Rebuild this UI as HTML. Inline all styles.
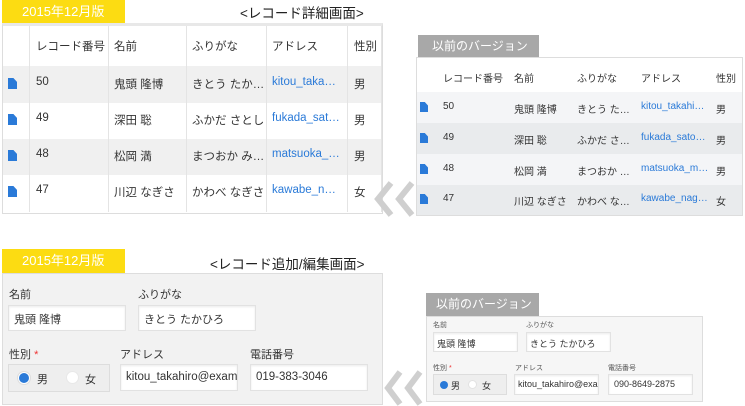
<!DOCTYPE html>
<html><head><meta charset="utf-8"><style>
*{margin:0;padding:0;box-sizing:border-box}
body{width:745px;height:406px;background:#fff;position:relative;overflow:hidden;font-family:"Liberation Sans","Noto Sans CJK JP",sans-serif;color:#333}
.a{position:absolute;white-space:nowrap}
.ytab{position:absolute;background:#fcdc12;color:#fff;font-size:13px;line-height:24px;padding-left:20px;white-space:nowrap}
.gtab{position:absolute;background:#a8a8a8;color:#fff;white-space:nowrap;overflow:hidden}
.bl{color:#2a7ad8}
.doc{position:absolute;width:9px;height:11px;background:#2a7ad8;clip-path:polygon(0 0,60% 0,100% 35%,100% 100%,0 100%)}
.inp{position:absolute;background:#fff;border:1px solid #e2e2e2;box-shadow:inset 0 1px 2px rgba(0,0,0,.08)}
.vl{position:absolute;width:1px;background:#e4e4e4}
.t1 .a{font-size:11.5px}
</style></head><body>

<!-- top left -->
<div class="ytab" style="left:2px;top:0;width:123px;height:24px;">2015年12月版</div>
<div class="a" style="left:240px;top:2px;font-size:13.5px;color:#222">&lt;レコード詳細画面&gt;</div>
<div class="a" style="left:2px;top:23px;width:381px;height:191px;border:1px solid #ddd;border-top:3px solid #e8e8e8;background:#fff"></div>
<div class="a" style="left:3px;top:66px;width:379px;height:37px;background:#f0f0f0"></div>
<div class="a" style="left:3px;top:139px;width:379px;height:36px;background:#f0f0f0"></div>
<div class="vl" style="left:29px;top:26px;height:186px"></div>
<div class="vl" style="left:108px;top:26px;height:186px"></div>
<div class="vl" style="left:186px;top:26px;height:186px"></div>
<div class="vl" style="left:266px;top:26px;height:186px"></div>
<div class="vl" style="left:347px;top:26px;height:186px"></div>
<div class="vl" style="left:381px;top:26px;height:186px"></div>
<div class="t1">
<div class="a" style="left:36px;top:38px">レコード番号</div><div class="a" style="left:114px;top:38px">名前</div><div class="a" style="left:192px;top:38px">ふりがな</div><div class="a" style="left:272px;top:38px">アドレス</div><div class="a" style="left:354px;top:38px">性別</div>
<div class="doc" style="left:8px;top:78px"></div><div class="a" style="left:36px;top:76px">50</div><div class="a" style="left:114px;top:76px">鬼頭 隆博</div><div class="a" style="left:192px;top:76px">きとう たか…</div><div class="a bl" style="left:272px;top:76px">kitou_taka…</div><div class="a" style="left:354px;top:76px">男</div>
<div class="doc" style="left:8px;top:114px"></div><div class="a" style="left:36px;top:112px">49</div><div class="a" style="left:114px;top:112px">深田 聡</div><div class="a" style="left:192px;top:112px">ふかだ さとし</div><div class="a bl" style="left:272px;top:112px">fukada_sat…</div><div class="a" style="left:354px;top:112px">男</div>
<div class="doc" style="left:8px;top:150px"></div><div class="a" style="left:36px;top:148px">48</div><div class="a" style="left:114px;top:148px">松岡 満</div><div class="a" style="left:192px;top:148px">まつおか み…</div><div class="a bl" style="left:272px;top:148px">matsuoka_…</div><div class="a" style="left:354px;top:148px">男</div>
<div class="doc" style="left:8px;top:186px"></div><div class="a" style="left:36px;top:184px">47</div><div class="a" style="left:114px;top:184px">川辺 なぎさ</div><div class="a" style="left:192px;top:184px">かわべ なぎさ</div><div class="a bl" style="left:272px;top:184px">kawabe_n…</div><div class="a" style="left:354px;top:184px">女</div>
</div>

<!-- top right -->
<div class="gtab" style="left:418px;top:35px;width:121px;height:22px;font-size:12px;line-height:22px;padding-left:14px">以前のバージョン</div>
<div class="a" style="left:416px;top:57px;width:327px;height:159px;border:1px solid #ddd;background:#fff"></div>
<div class="a" style="left:417px;top:92px;width:325px;height:31px;background:#f4f5f7"></div>
<div class="a" style="left:417px;top:123px;width:325px;height:31px;background:#e9ebed"></div>
<div class="a" style="left:417px;top:154px;width:325px;height:31px;background:#f4f5f7"></div>
<div class="a" style="left:417px;top:185px;width:325px;height:30px;background:#e9ebed"></div>
<div style="font-size:10px">
<div class="a" style="left:443px;top:70px">レコード番号</div><div class="a" style="left:514px;top:70px">名前</div><div class="a" style="left:577px;top:70px">ふりがな</div><div class="a" style="left:641px;top:70px">アドレス</div><div class="a" style="left:716px;top:70px">性別</div>
<div class="doc" style="left:420px;top:102px;width:8px;height:10px"></div><div class="a" style="left:443px;top:101px">50</div><div class="a" style="left:514px;top:101px">鬼頭 隆博</div><div class="a" style="left:577px;top:101px">きとう た…</div><div class="a bl" style="left:641px;top:101px">kitou_takahi…</div><div class="a" style="left:716px;top:101px">男</div>
<div class="doc" style="left:420px;top:133px;width:8px;height:10px"></div><div class="a" style="left:443px;top:132px">49</div><div class="a" style="left:514px;top:132px">深田 聡</div><div class="a" style="left:577px;top:132px">ふかだ さ…</div><div class="a bl" style="left:641px;top:132px">fukada_sato…</div><div class="a" style="left:716px;top:132px">男</div>
<div class="doc" style="left:420px;top:164px;width:8px;height:10px"></div><div class="a" style="left:443px;top:163px">48</div><div class="a" style="left:514px;top:163px">松岡 満</div><div class="a" style="left:577px;top:163px">まつおか …</div><div class="a bl" style="left:641px;top:163px">matsuoka_m…</div><div class="a" style="left:716px;top:163px">男</div>
<div class="doc" style="left:420px;top:194px;width:8px;height:10px"></div><div class="a" style="left:443px;top:193px">47</div><div class="a" style="left:514px;top:193px">川辺 なぎさ</div><div class="a" style="left:577px;top:193px">かわべ な…</div><div class="a bl" style="left:641px;top:193px">kawabe_nag…</div><div class="a" style="left:716px;top:193px">女</div>
</div>

<svg class="a" style="left:372px;top:180px" width="48" height="38"><path d="M19 3 L6 19 L19 35 M40 3 L27 19 L40 35" fill="none" stroke="#cfcfcf" stroke-width="6"/></svg>

<!-- bottom left -->
<div class="ytab" style="left:2px;top:249px;width:123px;height:24px;">2015年12月版</div>
<div class="a" style="left:210px;top:253px;font-size:13.5px;color:#222">&lt;レコード追加/編集画面&gt;</div>
<div class="a" style="left:2px;top:273px;width:381px;height:132px;border:1px solid #ddd;background:#f2f2f2"></div>
<div style="font-size:11px">
<div class="a" style="left:9px;top:286px">名前</div>
<div class="a" style="left:138px;top:286px">ふりがな</div>
<div class="inp" style="left:8px;top:305px;width:118px;height:26px"></div><div class="a" style="left:14px;top:311px">鬼頭 隆博</div>
<div class="inp" style="left:138px;top:305px;width:118px;height:26px"></div><div class="a" style="left:144px;top:311px">きとう たかひろ</div>
<div class="a" style="left:9px;top:346px">性別 <span style="color:#e33">*</span></div>
<div class="a" style="left:120px;top:346px">アドレス</div>
<div class="a" style="left:250px;top:346px">電話番号</div>
<div class="a" style="left:8px;top:364px;width:102px;height:28px;border:1px solid #ddd;background:#eee"></div>
<div class="a" style="left:18px;top:372px;width:12px;height:12px;border-radius:50%;background:#2a7ad8;border:1px solid #fff;box-shadow:0 0 0 1px #ddd"></div><div class="a" style="left:37px;top:371px">男</div>
<div class="a" style="left:66px;top:371px;width:13px;height:13px;border-radius:50%;background:#fff;border:1px solid #e8e8e8"></div><div class="a" style="left:85px;top:371px">女</div>
<div class="inp" style="left:120px;top:364px;width:118px;height:27px;overflow:hidden"><span class="a" style="left:5px;top:6px;font-size:11.5px">kitou_takahiro@examp</span></div>
<div class="inp" style="left:250px;top:364px;width:118px;height:27px"><span class="a" style="left:5px;top:6px;font-size:11.5px">019-383-3046</span></div>
</div>

<!-- bottom right -->
<div class="gtab" style="left:426px;top:293px;width:113px;height:23px;font-size:12px;line-height:23px;padding-left:10px">以前のバージョン</div>
<div class="a" style="left:426px;top:316px;width:277px;height:86px;border:1px solid #ddd;background:#f6f6f6"></div>
<div style="font-size:7px;color:#555">
<div class="a" style="left:433px;top:320px">名前</div><div class="a" style="left:526px;top:320px">ふりがな</div>
<div class="a" style="left:433px;top:363px">性別 <span style="color:#e33">*</span></div><div class="a" style="left:515px;top:363px">アドレス</div><div class="a" style="left:608px;top:363px">電話番号</div>
</div>
<div style="font-size:9px">
<div class="inp" style="left:433px;top:332px;width:85px;height:20px"></div><div class="a" style="left:437px;top:337px">鬼頭 隆博</div>
<div class="inp" style="left:526px;top:332px;width:85px;height:20px"></div><div class="a" style="left:530px;top:337px">きとう たかひろ</div>
<div class="a" style="left:433px;top:374px;width:74px;height:21px;border:1px solid #ddd;background:#eee"></div>
<div class="a" style="left:440px;top:381px;width:8px;height:8px;border-radius:50%;background:#2a7ad8"></div><div class="a" style="left:451px;top:379px">男</div>
<div class="a" style="left:468px;top:380px;width:9px;height:9px;border-radius:50%;background:#fff;border:1px solid #e2e2e2"></div><div class="a" style="left:482px;top:379px">女</div>
<div class="inp" style="left:514px;top:374px;width:85px;height:21px;overflow:hidden"><span class="a" style="left:3px;top:4px">kitou_takahiro@examp</span></div>
<div class="inp" style="left:608px;top:374px;width:85px;height:21px"><span class="a" style="left:5px;top:4px">090-8649-2875</span></div>
</div>

<svg class="a" style="left:382px;top:369px" width="46" height="37"><path d="M18 3 L6 19 L18 35 M38 3 L26 19 L38 35" fill="none" stroke="#cfcfcf" stroke-width="6"/></svg>
</body></html>
